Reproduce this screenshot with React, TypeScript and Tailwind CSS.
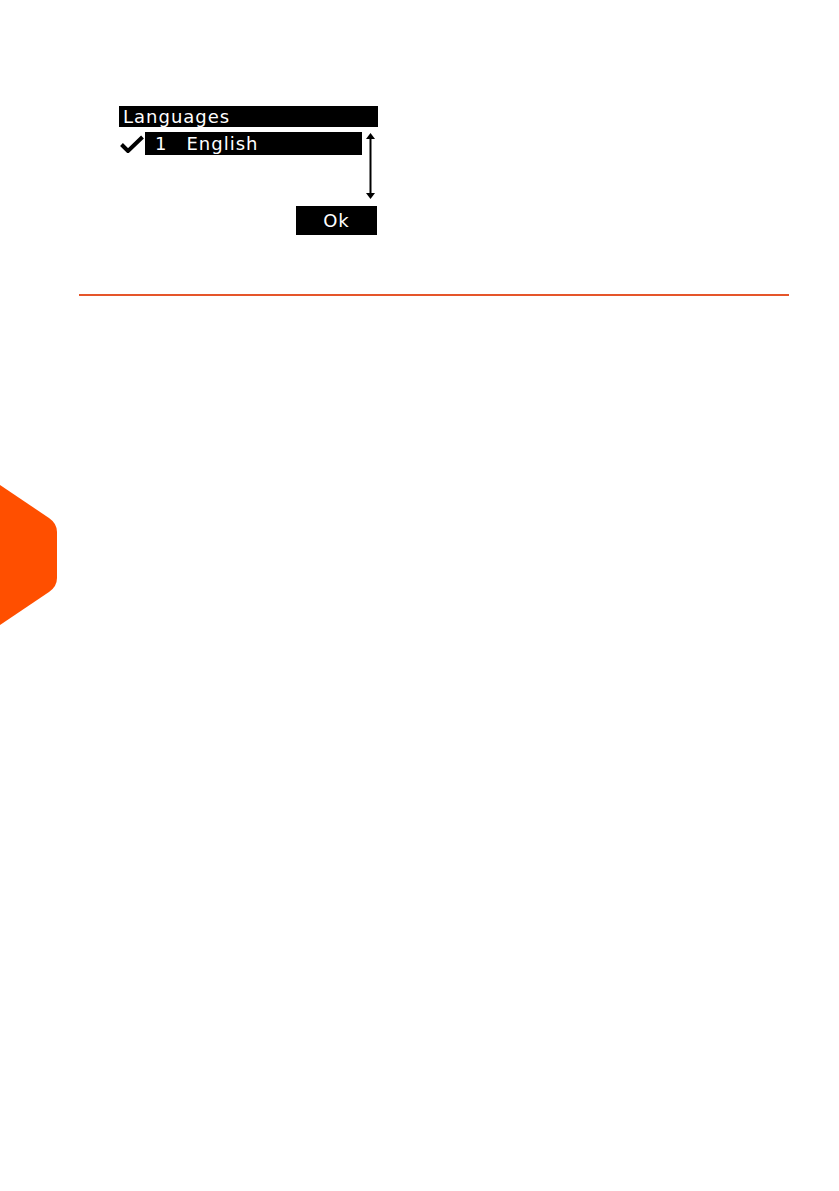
import React from 'react';

const lcdFont = { fontFamily: '"DejaVu Sans", "Liberation Sans", sans-serif' };

function CheckMark() {
    return (
        <svg width="24" height="18" viewBox="0 0 24 18" className="shrink-0">
            <path d="M1.5 9.5 L8 16 L22.5 2" fill="none" stroke="#000" strokeWidth="4" strokeLinejoin="miter" />
        </svg>
    );
}

function ScrollArrow() {
    return (
        <svg width="11" height="66" viewBox="0 0 11 66">
            <line x1="5.5" y1="4" x2="5.5" y2="62" stroke="#000" strokeWidth="2" />
            <polygon points="5.5,0 10,6 1,6" fill="#000" />
            <polygon points="5.5,66 10,60 1,60" fill="#000" />
        </svg>
    );
}

function SideTab() {
    return (
        <svg width="58" height="140" viewBox="0 0 58 140" className="block">
            <path
                d="M0 0 L49 33 Q57 38.5 57 47 L57 93 Q57 101.5 49 107 L0 140 Z"
                fill="#FF4F00"
            />
        </svg>
    );
}

export default function App() {
    return (
        <div className="w-[839px] h-[1191px] bg-white overflow-hidden">
            {/* LCD screen capture */}
            <div className="pl-[119px] pt-[106px]">
                <div className="w-[259px] text-black" style={lcdFont}>
                    {/* Title bar */}
                    <div className="h-[21px] bg-black text-white text-[18px] leading-[21px] tracking-[1px] pl-[4px] overflow-hidden">
                        Languages
                    </div>

                    {/* List + scroll arrow */}
                    <div className="flex items-start mt-[5px]">
                        <div className="flex items-center w-[243px]">
                            <div className="w-[26px] flex items-center pl-px">
                                <CheckMark />
                            </div>
                            <div className="w-[217px] h-[23px] bg-black text-white text-[18px] leading-[23px] tracking-[1px] flex">
                                <span className="pl-[10px]">1</span>
                                <span className="pl-[19px]">English</span>
                            </div>
                        </div>
                        <div className="flex-1 flex justify-center mt-px">
                            <ScrollArrow />
                        </div>
                    </div>

                    {/* Softkey */}
                    <div className="flex justify-end mt-[7px] pr-px">
                        <div className="w-[81px] h-[29px] bg-black text-white text-[18px] leading-[29px] text-center tracking-[1px]">
                            Ok
                        </div>
                    </div>
                </div>
            </div>

            {/* Section rule */}
            <div className="ml-[79px] mt-[59px] w-[710px] h-[2px] bg-[#E5552A]" />

            {/* Chapter tab */}
            <div className="mt-[189px]">
                <SideTab />
            </div>
        </div>
    );
}
